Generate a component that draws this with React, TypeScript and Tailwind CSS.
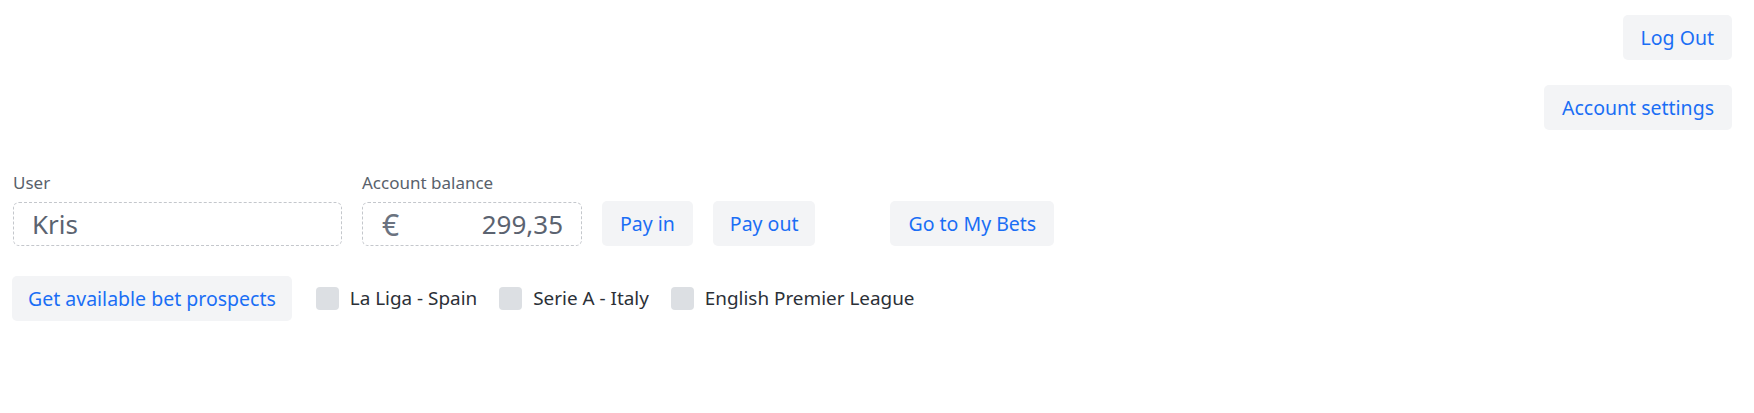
import React from "react";

const font = { fontFamily: '"Noto Sans", "Open Sans", sans-serif' };

function Btn({ children, className = "px-[18px]" }: { children: React.ReactNode; className?: string }) {
  return (
    <button
      className={`h-[45px] rounded-[5px] bg-[#f3f4f6] text-[19.5px] leading-[45px] text-[#1a6ef5] ${className}`}
      style={font}
    >
      {children}
    </button>
  );
}

function Check({ label }: { label: string }) {
  return (
    <label className="flex items-center gap-[11px]">
      <span className="block h-[23px] w-[23px] rounded-[4px] bg-[#dcdfe3]" />
      <span className="text-[18.9px] text-[#2b3037]">{label}</span>
    </label>
  );
}

export default function App() {
  return (
    <div className="w-[1754px] h-[413px] bg-white" style={font}>
      <div className="flex flex-col items-end gap-[25px] pr-[22px] pt-[15px]">
        <Btn>Log Out</Btn>
        <Btn>Account settings</Btn>
      </div>
      <div className="mt-[41px] flex items-end pl-[13px]">
        <div className="flex w-[329px] flex-col">
          <span className="mb-[7px] text-[17px] leading-[24px] text-[#59616b]">User</span>
          <div className="flex h-[44px] items-center rounded-[6px] border border-dashed border-[#c4c7cc] px-[18px] text-[26px] text-[#5b6370]">
            Kris
          </div>
        </div>
        <div className="ml-[20px] flex w-[220px] flex-col">
          <span className="mb-[7px] text-[17px] leading-[24px] text-[#59616b]">Account balance</span>
          <div className="flex h-[44px] items-center justify-between rounded-[6px] border border-dashed border-[#c4c7cc] pl-[19px] pr-[18px] text-[26px] text-[#5b6370]">
            <span className="text-[30px] text-[#6b7380]">€</span>
            <span>299,35</span>
          </div>
        </div>
        <Btn className="ml-[20px] px-[18px]">Pay in</Btn>
        <Btn className="ml-[20px] px-[17px]">Pay out</Btn>
        <Btn className="ml-[75px] px-[18px]">Go to My Bets</Btn>
      </div>
      <div className="mt-[30px] flex items-center pl-[12px]">
        <Btn className="px-[16px]">Get available bet prospects</Btn>
        <div className="ml-[24px] flex items-center gap-[22px]">
          <Check label="La Liga - Spain" />
          <Check label="Serie A - Italy" />
          <Check label="English Premier League" />
        </div>
      </div>
    </div>
  );
}
